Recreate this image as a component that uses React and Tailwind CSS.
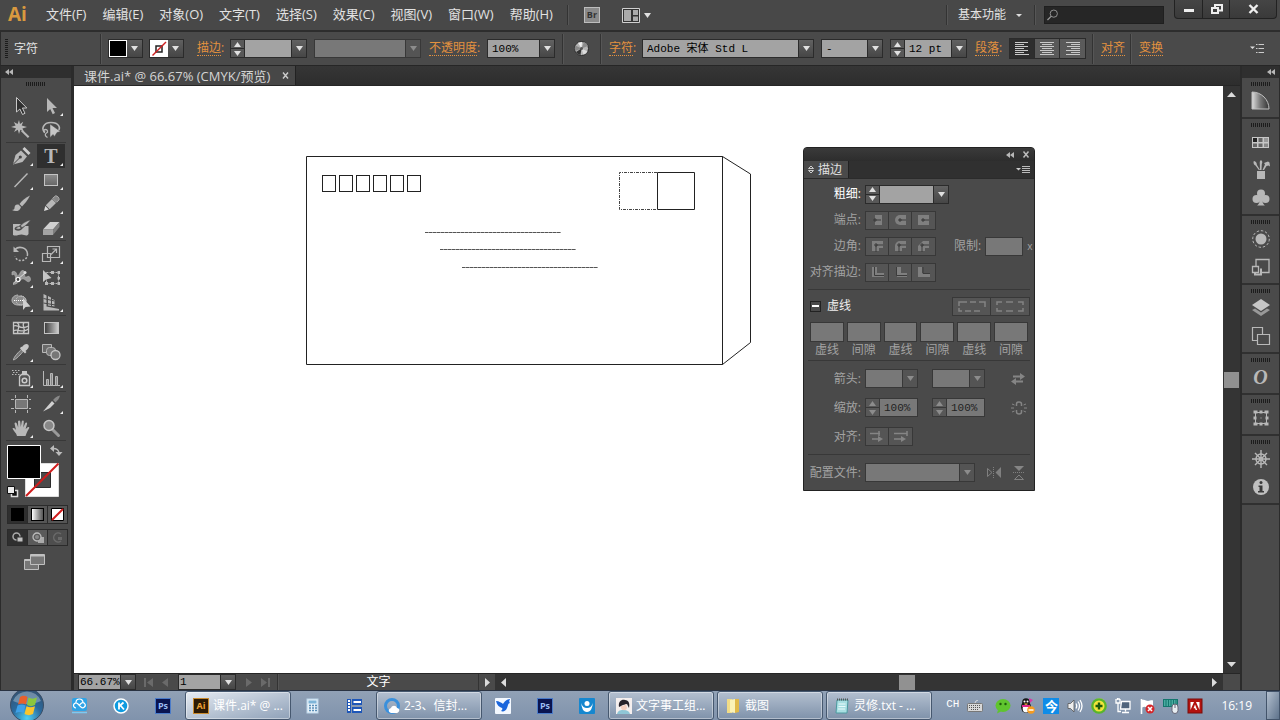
import { useState } from 'react'
import clsx from 'clsx'

const menus = ['文件(F)', '编辑(E)', '对象(O)', '文字(T)', '选择(S)', '效果(C)', '视图(V)', '窗口(W)', '帮助(H)']

/* ---------- small shared pieces ---------- */

function Caret({ up, dim }) {
  return (
    <svg width="7" height="5" viewBox="0 0 7 5" aria-hidden="true">
      <path d={up ? 'M0 5L3.5 0 7 5z' : 'M0 0h7L3.5 5z'} fill={dim ? '#8c8c8c' : '#e0e0e0'} />
    </svg>
  )
}

function DoubleArrow({ className }) {
  return (
    <svg className={className} width="8" height="6" viewBox="0 0 8 6" aria-hidden="true">
      <path d="M4 0v6L0 3zM8 0v6L4 3z" fill="#b8b8b8" />
    </svg>
  )
}

function Grip() {
  return (
    <svg width="20" height="4" viewBox="0 0 20 4" aria-hidden="true">
      <path d="M.5 0v4M2.500 0v4M4.500 0v4M6.500 0v4M8.500 0v4M10.500 0v4M12.500 0v4M14.500 0v4M16.500 0v4M18.500 0v4" stroke="#1c1c1c" />
    </svg>
  )
}

function Divider({ className }) {
  return <span className={clsx('border-l border-[#333] border-r border-r-[#565656]', className)} />
}

function Combo({ label, value = '', dim, tight, className }) {
  return (
    <span className={clsx('relative flex border', dim ? 'border-[#383838]' : 'border-[#2b2b2b]', tight ? 'h-4' : 'h-[19px]', className)}>
      <select
        aria-label={label}
        defaultValue={value}
        className={clsx(
          'h-full w-full appearance-none text-[11px] leading-[14px] text-black',
          tight ? 'pl-px' : 'pl-1',
          dim ? 'bg-[#787878]' : 'bg-[#a3a3a3]'
        )}
      >
        <option value={value}>{value}</option>
      </select>
      <span
        className={clsx(
          'pointer-events-none absolute inset-y-0 right-0 flex w-[15px] items-center justify-center border-l',
          dim ? 'border-[#383838] bg-[#545454]' : 'border-[#2b2b2b] bg-linear-to-b from-[#626262] to-[#464646]'
        )}
      >
        <Caret dim={dim} />
      </span>
    </span>
  )
}

function Stepper({ label, value = '', dim, drop, className }) {
  const line = dim ? 'border-[#383838]' : 'border-[#2b2b2b]'
  return (
    <span className={clsx('flex h-[19px] border', line, className)}>
      <span className={clsx('flex w-[14px] shrink-0 flex-col border-r bg-[#585858]', line)}>
        <button aria-label={`${label}增加`} className={clsx('flex flex-1 items-center justify-center border-b', line)}>
          <Caret up dim={dim} />
        </button>
        <button aria-label={`${label}减少`} className="flex flex-1 items-center justify-center">
          <Caret dim={dim} />
        </button>
      </span>
      <input
        aria-label={label}
        defaultValue={value}
        className={clsx('w-0 min-w-0 flex-1 pl-1 text-[11px] leading-4', dim ? 'bg-[#787878] text-[#222]' : 'bg-[#a3a3a3] text-black')}
      />
      {drop && (
        <button
          aria-label={`${label}选项`}
          className="flex w-[15px] shrink-0 items-center justify-center border-l border-[#2b2b2b] bg-linear-to-b from-[#626262] to-[#464646]"
        >
          <Caret />
        </button>
      )}
    </span>
  )
}

function OrangeLink({ children, colon, className }) {
  return (
    <span className={clsx('flex shrink-0 text-[#e3913f]', className)}>
      <a href="#" className="border-b border-dotted border-[#e3913f] leading-[14px]">
        {children}
      </a>
      {colon && <span className="leading-[14px]">:</span>}
    </span>
  )
}

/* ---------- menu bar ---------- */

function MenuBar() {
  return (
    <header className="flex h-8 shrink-0 items-start border-b-2 border-[#2d2d2d] bg-[#484848] text-[#e2e2e2]">
      <span className="ml-2 w-[38px] font-['Open_Sans',sans-serif] text-[19px] leading-7 font-bold text-[#d9993f]">Ai</span>
      <nav className="flex h-[30px] items-center gap-4 text-[13px]" aria-label="主菜单">
        {menus.map(m => (
          <button key={m} className="whitespace-nowrap">
            {m}
          </button>
        ))}
      </nav>
      <div className="flex h-[30px] items-center">
        <Divider className="ml-3.5 h-5" />
        <button
          aria-label="Bridge"
          className="ml-[15px] flex h-4 w-4 items-center justify-center border border-[#bdbdbd] bg-[#8a8a8a] text-[9px] leading-3 font-bold text-[#333]"
        >
          Br
        </button>
        <button aria-label="排列文档" className="ml-[22px] flex items-center gap-1">
          <svg width="18" height="15" viewBox="0 0 18 15">
            <path d="M.5.5h17v14H.5z" fill="#333" stroke="#d0d0d0" />
            <path d="M2 2h7v11H2zM11 2h5v5h-5zM11 8.500h5V13h-5z" fill="#aaa" />
          </svg>
          <Caret />
        </button>
      </div>
      <div className="ml-auto flex h-[30px] items-center">
        <Divider className="h-5" />
        <button className="ml-2.5 flex items-center gap-2.5 text-[12px] whitespace-nowrap">
          基本功能
          <svg width="6" height="3" viewBox="0 0 6 3">
            <path d="M0 0h6L3 3z" fill="#ddd" />
          </svg>
        </button>
        <Divider className="ml-3 h-5" />
        <label className="ml-2 flex h-[18px] w-[120px] items-center border border-[#1f1f1f] bg-[#262626] pl-0.5">
          <svg width="12" height="12" viewBox="0 0 12 12" fill="none" stroke="#9a9a9a">
            <circle cx="7.500" cy="4.500" r="4" />
            <path d="M4.500 7.500L.5 11.500" strokeWidth="1.500" />
          </svg>
          <input type="search" aria-label="搜索" className="w-full min-w-0 bg-transparent pl-1 text-[11px] outline-none" />
        </label>
      </div>
      <div className="mr-[3px] ml-2.5 flex h-[19px] divide-x divide-[#222] overflow-hidden rounded-b border border-t-0 border-[#222] bg-linear-to-b from-[#454545] to-[#3a3a3a]">
        <button aria-label="最小化" className="flex w-7 items-center justify-center">
          <svg width="12" height="12" viewBox="0 0 12 12">
            <path d="M1 6h10v3H1z" fill="#eee" />
          </svg>
        </button>
        <button aria-label="还原" className="flex w-[27px] items-center justify-center">
          <svg width="13" height="12" viewBox="0 0 13 12" fill="none" stroke="#eee" strokeWidth="2">
            <path d="M5 4V2h7v5.500H9" />
            <path d="M2 5h6v5H2z" />
          </svg>
        </button>
        <button aria-label="关闭" className="flex w-[46px] items-center justify-center">
          <svg width="11" height="10" viewBox="0 0 11 10">
            <path d="M1.500 1l8 8M9.500 1l-8 8" stroke="#eee" strokeWidth="2.400" />
          </svg>
        </button>
      </div>
    </header>
  )
}

/* ---------- control bar ---------- */

const alignIcons = [
  ['左对齐', 'M0 .5h13M0 2.500h9M0 4.500h13M0 6.500h9M0 8.500h13M0 10.500h9M0 12.500h14'],
  ['居中对齐', 'M0 .5h14M2 2.500h10M0 4.500h14M2 6.500h10M0 8.500h14M2 10.500h10M0 12.500h14'],
  ['右对齐', 'M0 .5h14M5 2.500h9M1 4.500h13M5 6.500h9M0 8.500h14M5 10.500h9M0 12.500h14'],
]

function ControlBar() {
  const [align, setAlign] = useState('左对齐')
  return (
    <div className="flex h-[34px] shrink-0 items-center border-b border-l border-b-[#262626] border-l-[#2b2b2b] bg-[#4a4a4a] text-[12px] text-[#e2e2e2]">
      <svg className="ml-1" width="3" height="20" viewBox="0 0 3 20" aria-hidden="true">
        <path d="M0 .5h3M0 2.500h3M0 4.500h3M0 6.500h3M0 8.500h3M0 10.500h3M0 12.500h3M0 14.500h3M0 16.500h3M0 18.500h3" stroke="#1c1c1c" />
      </svg>
      <span className="ml-1.5 w-[86px] shrink-0">字符</span>
      <Divider className="h-[30px]" />
      <div className="ml-[6px] flex h-[19px] border border-[#2b2b2b]">
        <button aria-label="填色" className="w-[18px] border border-white bg-black" />
        <button aria-label="填色选项" className="flex w-[15px] items-center justify-center bg-linear-to-b from-[#606060] to-[#464646]">
          <Caret />
        </button>
      </div>
      <div className="ml-[6px] flex h-[19px] border border-[#2b2b2b]">
        <button aria-label="描色" className="w-[18px] bg-white">
          <svg width="18" height="17" viewBox="0 0 18 17">
            <path d="M6 6h6v6H6z" fill="none" stroke="#222" strokeWidth="1.500" />
            <path d="M2.500 15.500L16 2" stroke="#cf2020" strokeWidth="1.500" />
          </svg>
        </button>
        <button aria-label="描色选项" className="flex w-[15px] items-center justify-center bg-linear-to-b from-[#606060] to-[#464646]">
          <Caret />
        </button>
      </div>
      <OrangeLink colon className="ml-[13px] w-[33px]">描边</OrangeLink>
      <Stepper label="描边粗细" drop className="w-[77px]" />
      <Combo label="画笔定义" dim className="ml-[7px] w-[107px]" />
      <OrangeLink colon className="ml-2 w-[58px]">不透明度</OrangeLink>
      <Combo label="不透明度" value="100%" className="w-[68px] font-['Liberation_Mono',monospace]" />
      <Divider className="ml-[7px] h-[30px]" />
      <button aria-label="重新着色图稿" className="ml-2.5">
        <svg width="15" height="15" viewBox="0 0 15 15">
          <circle cx="7.500" cy="7.500" r="7" fill="#b5b5b5" stroke="#2a2a2a" />
          <path d="M7.500 7.500L1.500 4.500A7 7 0 0 0 1 10z" fill="#8a8a8a" />
          <path d="M7.500 7.500L2 11a7 7 0 0 0 4.500 3z" fill="#333" />
          <path d="M7.500 7.500L10 1a7 7 0 0 1 4 4z" fill="#8b8b8b" />
          <path d="M7.500 7.500L13.500 10.500a7 7 0 0 1-4 3z" fill="#dcdcdc" />
          <path d="M7.500 7.500L4 1.800 8 1z" fill="#eee" />
          <circle cx="7.500" cy="7.500" r="1.500" fill="#555" />
        </svg>
      </button>
      <Divider className="ml-[11px] h-[30px]" />
      <OrangeLink colon className="ml-[7px] w-[33px]">字符</OrangeLink>
      <Combo
        label="字体"
        value="Adobe 宋体 Std L"
        className="w-[172px] font-['Liberation_Mono','Noto_Sans_CJK_SC',monospace]"
      />
      <Combo label="字体样式" value="-" className="ml-[7px] w-[62px] font-['Liberation_Mono',monospace]" />
      <Stepper label="字号" value="12 pt" drop className="ml-[7px] w-[77px] font-['Liberation_Mono',monospace]" />
      <OrangeLink colon className="ml-2 w-[34px]">段落</OrangeLink>
      <div className="flex h-[21px] divide-x divide-[#2b2b2b] border border-[#2b2b2b]">
        {alignIcons.map(([name, d]) => (
          <button
            key={name}
            aria-label={name}
            aria-pressed={align === name}
            onClick={() => setAlign(name)}
            className={clsx('flex w-[25px] items-center justify-center', align === name ? 'bg-[#2e2e2e]' : 'bg-[#5a5a5a]')}
          >
            <svg width="14" height="13" viewBox="0 0 14 13">
              <path d={d} stroke="#c9c9c9" />
            </svg>
          </button>
        ))}
      </div>
      <Divider className="ml-[6px] h-[30px]" />
      <OrangeLink className="ml-[7px]">对齐</OrangeLink>
      <Divider className="ml-[5px] h-[30px]" />
      <OrangeLink className="ml-[7px]">变换</OrangeLink>
      <button aria-label="面板菜单" className="mr-4 ml-auto">
        <svg width="14" height="9" viewBox="0 0 14 9">
          <path d="M0 2.500h5L2.500 5z" fill="#ddd" />
          <path d="M6 .5h1.500M6 4.500h1.500M6 8.500h1.500M8.500.5H14M8.500 4.500H14M8.500 8.500H14" stroke="#ccc" />
        </svg>
      </button>
    </div>
  )
}

/* ---------- tool icons, drawn on a 20x20 grid ---------- */

const G = '#b8b8b8'

const toolIcons = {
  select: <path d="M5.500 1.500v14.500l3.400-3 2.600 5.500 2.500-1.200-2.600-5.300h4.400z" fill="#303030" stroke="#c8c8c8" />,
  direct: <path d="M6 2v14l3.200-3 2.500 5.200 2.300-1.100-2.500-5.100H16z" fill={G} />,
  wand: (
    <g fill={G}>
      <path d="M8 0l1 4 3.200-2.200L10.700 5.500 16 7l-4.600 1.400 1.600 3.400-3.600-2L8 14 6.800 9.800 3 12l2-3.800L0 7l4.600-1.500L2.800 2 6.600 4z" />
      <path d="M10 11.200l1.400-1.400 7 6.800-1.500 1.500z" />
    </g>
  ),
  lasso: (
    <g>
      <path d="M4 12.500C0 9.500 2 2.500 10 2.500c8 0 10 5.500 7 8.500" fill="none" stroke={G} strokeWidth="1.600" />
      <path d="M4 12.500c-2-.5-1.500-3 .5-3s3 2.500 1 3.500-1.500 3 1 4.500" fill="none" stroke={G} strokeWidth="1.300" />
      <path d="M9 4v13.500l3-3 1.500 2 2.500-4 3.500-1z" fill="#c6c6c6" stroke="#4a4a4a" strokeWidth=".5" />
    </g>
  ),
  pen: (
    <g>
      <path d="M2 18.500L4.500 9l5.500-4.500 6 6-4.500 5.500z" fill={G} />
      <path d="M11.500 3L13.500 1l6 6-2 2z" fill="#cdcdcd" />
      <path d="M2.500 18L8.500 12" stroke="#444" />
      <circle cx="9.300" cy="11" r="1.600" fill="#444" />
    </g>
  ),
  line: <path d="M3.500 17L16.500 3.500" stroke={G} strokeWidth="1.400" />,
  rect: <rect x="3.500" y="4.500" width="13" height="11" fill="url(#toolShade)" stroke="#c4c4c4" />,
  brush: (
    <g fill={G}>
      <path d="M19 1.500C14 4 10 7.500 8.500 10l2.500 2.500C13.500 10 17 6 19 1.500z" />
      <path d="M7.500 10.500c-3-.5-4 1.500-4 3.500 0 1-1 2-2.500 2 3 2 8 1.500 9-3z" />
    </g>
  ),
  pencil: (
    <g>
      <path d="M3 17l1.300-5L7.800 15.500z" fill="#ddd" />
      <path d="M4.800 11.300L11 5l4 4-6.300 6.200z" fill={G} />
      <path d="M11.600 4.300l3-2.500c2 0 3.800 2 3.500 4l-2.500 2.500z" fill="#858585" stroke="#aaa" />
    </g>
  ),
  blob: (
    <g fill={G}>
      <path d="M2 6h8L7.500 8.500C5 8.500 4 9 3.500 11c1 2 4.500 2 6.500 1l4-4h3.500v8c-2 3-4 .5-7 .5S5 18.500 2 17z" />
      <path d="M19.500 2C15 3 11 5.500 9.500 8l1.500 1.500c3-1 6.500-4.500 8.500-7.500zM8.500 8.500c-2 0-2.500 1.500-4 2 1.500 1 5 1 5.500-.5z" stroke="#4a4a4a" strokeWidth=".5" />
    </g>
  ),
  eraser: (
    <g>
      <path d="M2 11.500l7-7.500h9.500L12 11.500z" fill="#d0d0d0" />
      <path d="M2 11.500h10V17H2z" fill="#a3a3a3" />
      <path d="M12 11.500l6.500-7.500v5L12 17z" fill="#7d7d7d" />
    </g>
  ),
  rotate: (
    <g fill="none" stroke={G} strokeWidth="1.500">
      <path d="M4 5.500C8 1.500 16 3.500 16.500 10" />
      <path d="M16.500 10c0 8-10.500 8.500-12.500 2.500" strokeDasharray="2 1.500" />
      <path d="M2.500 2.500v5.500H8z" fill={G} stroke="none" />
    </g>
  ),
  scale: (
    <g fill="none" stroke={G} strokeWidth="1.200">
      <path d="M6.500 2.500h12v11h-12z" />
      <path d="M1.500 9.500h8v8h-8z" />
      <path d="M10 10.500L15.500 5M11.500 5h4v4" />
    </g>
  ),
  width: (
    <g>
      <path d="M1 4c3-2 5 1 5 4 3 0 3-6 6-5.500s.5 6 2.500 6.500 3-2 4.500.5-.5 5-2.500 4-4-4-6.500-2-4 5-8 5c3-2 3-4 2.500-7S3 6 1 7z" fill="#999" stroke={G} strokeWidth=".6" />
      <path d="M2 15.500L14 5" stroke="#ddd" />
      <circle cx="7" cy="11.500" r="2" fill="#444" stroke="#fff" strokeWidth="1.200" />
      <circle cx="14" cy="4.500" r="1.500" fill="#ddd" />
    </g>
  ),
  free: (
    <g>
      <path d="M5.500 4.500h12v11h-12z" fill="none" stroke={G} strokeDasharray="2 1" />
      <path d="M10 3h3v3h-3zM16.500 3H19v3h-2.500zM16.500 9H19v2.500h-2.500zM16.500 14H19v3h-2.500zM10 14h3v3h-3zM4 14h3v3H4z" fill={G} />
      <path d="M2 2v12l3-2.500L10.500 10z" fill="#c6c6c6" />
    </g>
  ),
  builder: (
    <g>
      <path d="M7 3c-8 .5-8 10 0 10h4c6-1 5-9-2-9" fill="#8b8b8b" stroke={G} />
      <path d="M3 8.500h9" stroke="#fff" strokeDasharray="1 1" />
      <ellipse cx="10" cy="8.500" rx="5" ry="4.500" fill="none" stroke="#ccc" strokeDasharray="1 1" />
      <path d="M12 6v12l2.600-3 4.900-.5z" fill="#d0d0d0" />
    </g>
  ),
  perspective: (
    <g>
      <path d="M2.500 2l3 1.500v11L18 17v1.500H2.500z" fill={G} />
      <path d="M7 4l3 1.500V14L7 13.500zM11 7l2.500 1v6.500L11 14z" fill={G} />
      <path d="M2.500 6.500l11 2.500M2.500 11l12 2" stroke="#4a4a4a" fill="none" />
    </g>
  ),
  mesh: (
    <g fill="none" stroke="#c6c6c6" strokeWidth="1.300">
      <path d="M2.500 4.500h15v11h-15z" />
      <path d="M2.500 8C7 5.500 9 13 17.500 8M2.500 13c4-3 9 3 15-2M6 4.500c5 3-1 8 1 11M13 4.500c-3 3 3 8-1 11" />
    </g>
  ),
  gradient: <rect x="3.500" y="4.500" width="14" height="11" fill="url(#toolGradient)" stroke="#c4c4c4" />,
  eyedropper: (
    <g>
      <path d="M2.500 18c0-3 6-9 8-10.500l1.800 1.800C10 12 5 17.500 2.500 18z" fill="#777" stroke={G} />
      <path d="M9 6.500l5 5 1.500-1.500-1-1C17 7 18.500 5 17.500 3c-2-2-4.500-.5-6.500 2L10 4.800z" fill="#c6c6c6" />
    </g>
  ),
  blend: (
    <g>
      <path d="M1.500 2.500h9v8h-9z" fill="#6a6a6a" stroke={G} />
      <rect x="5.500" y="5.500" width="9" height="8" rx="3" fill="#777" stroke={G} />
      <circle cx="14.500" cy="13" r="4.500" fill="#777" stroke="#c6c6c6" strokeWidth="1.300" />
    </g>
  ),
  spray: (
    <g>
      <path d="M1 2.500h8M2 4.500h6M1 6.500h8" stroke={G} strokeDasharray="1.500 1.500" />
      <path d="M11 3h5v3h-5z" fill="#c6c6c6" />
      <path d="M8.500 8.500l2-2h6l2 2v9h-10z" fill="#555" stroke="#c6c6c6" strokeWidth="1.300" />
      <circle cx="13.500" cy="12.500" r="2.300" fill="none" stroke="#ccc" strokeWidth="1.500" />
    </g>
  ),
  graph: (
    <g>
      <path d="M2.500 3v14.500H19" stroke={G} fill="none" />
      <path d="M5.500 11.500h2v6h-2zM9.500 5.500h2v12h-2zM14.500 8.500h2v9h-2z" fill="#888" stroke={G} />
    </g>
  ),
  artboard: (
    <g>
      <path d="M4.500 5.500h12v9h-12z" fill="#777" stroke={G} />
      <path d="M4.500 1v3M16.500 1v3M4.500 16v3M16.500 16v3M0 5.500h3M0 14.500h3M18 5.500h2M18 14.500h2" stroke={G} fill="none" />
    </g>
  ),
  slice: (
    <g>
      <path d="M2 17.500L11 7l2.500 2.500L9 14z" fill="#d0d0d0" />
      <path d="M12 6c2-2.500 3.500-3.500 7-4.500-1 3.500-2 4.500-4.500 7z" fill="#888" />
    </g>
  ),
  hand: (
    <path d="M6 18c-.5-3-4-5.500-4.500-7.500 1-1 2.500 0 3.500 1.500L3.500 5.500C4 4 5.500 4.500 6 6l1.200 3.500L7 3.500C7.300 2 9 2 9.300 3.500L9.800 9l1-5.800c.4-1.200 2-1 2 .3L12.300 9.500l2-4.500c.6-1 2-.5 1.800.8l-1.500 5.200 2.400-2c1-.4 1.800.5 1 1.500C16.500 13 15.500 15 14.500 18z" fill={G} />
  ),
  zoom: (
    <g>
      <path d="M11 11l6.500 6.500" stroke="#999" strokeWidth="3" strokeLinecap="round" />
      <circle cx="8" cy="7.500" r="5" fill="#888" stroke="#c6c6c6" strokeWidth="1.500" />
    </g>
  ),
}

const toolGroups = [
  { pad: 'pt-0', tools: [['select', '选择工具', 0], ['direct', '直接选择工具', 1], ['wand', '魔棒工具', 0], ['lasso', '套索工具', 0]] },
  {
    pad: 'pt-px',
    tools: [
      ['pen', '钢笔工具', 1], ['type', '文字工具', 1], ['line', '直线段工具', 1], ['rect', '矩形工具', 1],
      ['brush', '画笔工具', 0], ['pencil', '铅笔工具', 1], ['blob', '斑点画笔工具', 0], ['eraser', '橡皮擦工具', 1],
    ],
  },
  {
    pad: 'py-px',
    tools: [
      ['rotate', '旋转工具', 1], ['scale', '比例缩放工具', 1], ['width', '宽度工具', 1],
      ['free', '自由变换工具', 0], ['builder', '形状生成器工具', 1], ['perspective', '透视网格工具', 1],
    ],
  },
  { pad: 'pt-0', tools: [['mesh', '网格工具', 0], ['gradient', '渐变工具', 0], ['eyedropper', '吸管工具', 1], ['blend', '混合工具', 0]] },
  { pad: 'py-px', tools: [['spray', '符号喷枪工具', 1], ['graph', '柱形图工具', 1]] },
  { pad: 'pt-0', tools: [['artboard', '画板工具', 0], ['slice', '切片工具', 1], ['hand', '抓手工具', 1], ['zoom', '缩放工具', 0]] },
]

function Toolbox() {
  const [tool, setTool] = useState('type')
  return (
    <aside className="w-[74px] shrink-0 border-r-3 border-l border-[#2b2b2b] bg-[#4a4a4a]">
      <div className="flex h-3 items-center bg-[#2f2f2f] pl-1">
        <DoubleArrow />
      </div>
      <div className="flex h-4 justify-center pt-1">
        <Grip />
      </div>
      <svg className="absolute h-0 w-0" aria-hidden="true">
        <defs>
          <linearGradient id="toolShade" x2="0" y2="1">
            <stop stopColor="#8c8c8c" />
            <stop offset="1" stopColor="#666" />
          </linearGradient>
          <linearGradient id="toolGradient">
            <stop stopColor="#3a3a3a" />
            <stop offset="1" stopColor="#d0d0d0" />
          </linearGradient>
        </defs>
      </svg>
      {toolGroups.map((group, i) => (
        <div key={i} className={clsx('mx-[5px] grid grid-cols-2 gap-x-0.5 px-px', i > 0 && 'border-t border-[#383838]', group.pad)}>
          {group.tools.map(([id, name, more]) => (
            <button
              key={id}
              aria-label={name}
              aria-pressed={tool === id}
              onClick={() => setTool(id)}
              className={clsx('relative flex h-6 items-center justify-center', tool === id && 'bg-[#2f2f2f]')}
            >
              {id === 'type' ? (
                <span className="font-['Liberation_Serif',serif] text-[20px] leading-6 font-bold text-[#b8b8b8]">T</span>
              ) : (
                <svg width="20" height="20" viewBox="0 0 20 20">{toolIcons[id]}</svg>
              )}
              {more === 1 && (
                <svg className="absolute right-0.5 bottom-0.5" width="3" height="3" viewBox="0 0 3 3">
                  <path d="M3 0v3H0z" fill="#eee" />
                </svg>
              )}
            </button>
          ))}
        </div>
      ))}
      <div className="mx-[5px] border-t border-[#383838] px-px pt-1">
        <svg width="56" height="56" viewBox="0 0 56 56" role="img" aria-label="填色和描边">
          <path d="M18.500 18.500h33v33h-33z" fill="#fff" stroke="#ddd" />
          <path d="M27.500 27.500h16v15h-16z" fill="#4a4a4a" stroke="#2b2b2b" />
          <path d="M19 51L51.500 18.500" stroke="#d01c1c" strokeWidth="2" />
          <path d="M.5.500h33v33H.5z" fill="#000" stroke="#fff" />
          <path d="M46 3.500c4.500 0 6 2 6 5" fill="none" stroke="#bbb" strokeWidth="1.300" />
          <path d="M47 0v7L43 3.500zM48.500 7h7L52 11z" fill="#bbb" />
          <path d="M4.500 45.500h6v6h-6z" fill="#111" stroke="#ddd" strokeWidth="1.500" />
          <path d="M.5 41.500h7v7h-7z" fill="#eee" stroke="#111" />
        </svg>
      </div>
      <div className="mr-[3px] ml-[6px] mt-1 flex h-[19px] divide-x divide-[#2b2b2b] border border-[#2b2b2b]">
        <button aria-label="颜色" className="flex flex-1 items-center justify-center bg-[#2f2f2f]">
          <span className="h-[13px] w-[13px] bg-black" />
        </button>
        <button aria-label="渐变" className="flex flex-1 items-center justify-center bg-[#555]">
          <span className="h-[13px] w-[13px] border border-black bg-linear-to-r from-white to-[#555]" />
        </button>
        <button aria-label="无" className="flex flex-1 items-center justify-center bg-[#555]">
          <svg width="13" height="13" viewBox="0 0 13 13">
            <path d="M.5.500h12v12H.5z" fill="#fff" stroke="#000" />
            <path d="M1 12L12 1" stroke="#d01c1c" strokeWidth="2" />
          </svg>
        </button>
      </div>
      <div className="mr-[3px] ml-[6px] mt-[5px] flex h-[17px] divide-x divide-[#2b2b2b] border border-[#2b2b2b]">
        <button aria-label="正常绘图" className="flex flex-1 items-center justify-center bg-[#2f2f2f]">
          <svg width="12" height="11" viewBox="0 0 12 11">
            <circle cx="4.500" cy="4.500" r="3.500" fill="none" stroke="#aaa" strokeWidth="1.500" />
            <path d="M5 5h6v5H5z" fill="#c0c0c0" stroke="#333" />
          </svg>
        </button>
        <button aria-label="背面绘图" className="flex flex-1 items-center justify-center bg-[#5a5a5a]">
          <svg width="12" height="11" viewBox="0 0 12 11">
            <path d="M6 5h6v6H6z" fill="#aaa" />
            <circle cx="5" cy="5" r="4" fill="#5a5a5a" stroke="#bbb" strokeWidth="1.300" />
            <circle cx="5" cy="5" r="2" fill="#888" />
          </svg>
        </button>
        <button aria-label="内部绘图" className="flex flex-1 items-center justify-center bg-[#4e4e4e]">
          <svg width="12" height="11" viewBox="0 0 12 11">
            <path d="M9 2a4.500 4.500 0 1 0 0 7" fill="none" stroke="#6a6a6a" strokeWidth="1.500" />
            <path d="M6 5h4v3H6z" fill="#6a6a6a" />
          </svg>
        </button>
      </div>
      <button aria-label="更改屏幕模式" className="mt-2 ml-[22px] block">
        <svg width="23" height="17" viewBox="0 0 23 17" stroke="#c0c0c0" fill="#777">
          <path d="M1.500 5.500h14v10h-14z" />
          <path d="M7.500.500h14v10h-14z" />
          <path d="M2 6h5M8 1.500h13" strokeWidth="2" />
        </svg>
      </button>
    </aside>
  )
}

/* ---------- right dock ---------- */

const dockGroups = [
  [['颜色', <g key="c"><path d="M1 1v17h17A17 17 0 0 0 1 1z" fill="url(#dockWedge)" stroke="#c0c0c0" /></g>]],
  [
    ['色板', <g key="s"><path d="M1 5h17v11H1z" fill="#c6c6c6" /><path d="M2 6h4v4H2z" fill="#222" /><path d="M7.500 6h4v4h-4zM2 11.500h4V15H2zM7.500 11.500h4V15h-4z" fill="#666" /><path d="M13 6h4v4h-4z" fill="#999" /><path d="M13 11.500h4V15h-4z" fill="#888" /></g>],
    ['画笔', <g key="b" fill="#b8b8b8"><path d="M6 11h8v8H6z" /><path d="M9 10L8.800 3.500C8.500 1 9.500-.5 10.500.5s1 2 .3 3.500L10.500 10zM7.800 10L4.500 5.500C2.500 4.500 2 2 3 1c2 .5 3 2 2.800 3.800L9 10zM11.500 10l2.500-5.500-1-1.500 4-1.500 1.500 1 .5 4-1.500-1-2 .500L13 10z" /></g>],
    ['符号', <g key="y" fill="#b8b8b8"><circle cx="10" cy="5.500" r="4" /><circle cx="5.500" cy="11" r="4" /><circle cx="14.500" cy="11" r="4" /><path d="M9 9h2c0 5 1 7 3 8.500H6C8 16 9 14 9 9z" /></g>],
  ],
  [
    ['外观', <g key="a"><circle cx="10" cy="10" r="5.500" fill="#b8b8b8" /><circle cx="10" cy="10" r="8.300" fill="none" stroke="#b8b8b8" strokeDasharray="2.500 1.800" /></g>],
    ['图形样式', <g key="g" fill="none" stroke="#b8b8b8" strokeWidth="1.300"><path d="M5 9V2.500h13v13H11" /><path d="M4 10.500v7h6v-6" strokeWidth="2" /><path d="M1.500 9.500h6v6h-6z" fill="#4a4a4a" /></g>],
  ],
  [
    ['图层', <g key="l"><path d="M1 12l9 6 9-6-3-1.500-6 4-6-4z" fill="#999" /><path d="M10 1l9 6-9 6-9-6z" fill="#c6c6c6" /></g>],
    ['画板', <g key="r" fill="#4a4a4a" stroke="#b8b8b8" strokeWidth="1.200"><path d="M1.500 1.500h10v13h-10z" /><path d="M6.500 8.500h12v10h-12z" /></g>],
  ],
  [['OpenType', null]],
  [['变换', <g key="t"><path d="M4.500 4.500h11v11h-11z" fill="none" stroke="#b8b8b8" /><path d="M2.500 2.500h4v3h-4zM8.500 2.500h3v3h-3zM13.500 2.500h4v3h-4zM2.500 8.500h3v3h-3zM14.500 8.500h3v3h-3zM2.500 14.500h4v3h-4zM8.500 14.500h3v3h-3zM13.500 14.500h4v3h-4z" fill="#b8b8b8" /><path d="M9.500 9.500h1v1h-1z" fill="#b8b8b8" /></g>]],
  [
    ['导航器', <g key="n" stroke="#b8b8b8" fill="none" strokeWidth="1.400"><circle cx="10" cy="10" r="5" /><path d="M10 1v18M1 10h18M4 4l12 12M16 4L4 16" /><circle cx="10" cy="10" r="1" fill="#4a4a4a" /></g>],
    ['信息', <g key="i"><circle cx="10" cy="10" r="8" fill="#c0c0c0" /><circle cx="10" cy="5.500" r="1.500" fill="#3a3a3a" /><path d="M7.500 8.500h4V14h1.500v1.500h-6V14h1.500v-4H7.500z" fill="#3a3a3a" /></g>],
  ],
]

function Dock() {
  return (
    <aside className="w-10 shrink-0 border-r border-l-2 border-[#2b2b2b] bg-[#4a4a4a]">
      <div className="flex h-3 items-center justify-end bg-[#2f2f2f] pr-1">
        <DoubleArrow />
      </div>
      {dockGroups.map((group, i) => (
        <div key={i} className="flex flex-col items-center border-b-2 border-[#303030] pb-0.5">
          <div className="flex h-[9px] items-start pt-1">
            <Grip />
          </div>
          {group.map(([name, icon]) => (
            <button key={name} aria-label={name} className="flex h-7 w-7 items-center justify-center">
              {icon ? (
                <svg width="20" height="20" viewBox="0 0 20 20">
                  <defs>
                    <linearGradient id="dockWedge">
                      <stop stopColor="#ddd" />
                      <stop offset=".5" stopColor="#777" />
                      <stop offset="1" stopColor="#333" />
                    </linearGradient>
                  </defs>
                  {icon}
                </svg>
              ) : (
                <span className="font-['Liberation_Serif',serif] text-[20px] leading-7 font-bold text-[#b8b8b8] italic">O</span>
              )}
            </button>
          ))}
        </div>
      ))}
    </aside>
  )
}

/* ---------- document ---------- */

function Envelope() {
  return (
    <svg className="absolute top-0 left-0" width="700" height="300" viewBox="74 86 700 300" fill="none" stroke="#222" role="img" aria-label="信封">
      <path d="M306.500 156.500h416v208h-416z" />
      <path d="M722.500 156.500l28 17.500v168.500l-28 22z" />
      {[0, 1, 2, 3, 4, 5].map(i => (
        <rect key={i} x={322.5 + i * 17} y="175.500" width="13" height="16" />
      ))}
      <path d="M657 172.500h-37.500v37H657" strokeDasharray="3 1 1 1" stroke="#444" />
      <path d="M657.500 172.500h37v37h-37z" />
      <path d="M425 232.500h136M440 249.500h136M462 267.500h136" stroke="#999" />
      <path d="M425 232.500h136M440 249.500h136M462 267.500h136" stroke="#555" strokeDasharray="3 1" />
    </svg>
  )
}

function Label({ children, bright }) {
  return (
    <span className={clsx('w-[55px] shrink-0 text-right whitespace-nowrap', bright ? 'text-white' : 'text-[#a2a2a2]')}>
      {children}:
    </span>
  )
}

function PanelRow({ children, className }) {
  return <div className={clsx('flex items-center gap-1 pl-0.5', className)}>{children}</div>
}

function IconButtons({ items, className }) {
  return (
    <span className="flex divide-x divide-[#383838] border border-[#383838] bg-[#555]">
      {items.map(([name, icon]) => (
        <button key={name} aria-label={name} className={clsx('flex items-center justify-center', className)}>
          {icon}
        </button>
      ))}
    </span>
  )
}

function glyph(d, dot) {
  return (
    <svg width="13" height="12" viewBox="0 0 13 12">
      <path d={d} fill="#7f7f7f" />
      <path d={dot} stroke="#3c3c3c" fill="none" />
    </svg>
  )
}

const caps = [
  ['平头端点', glyph('M4 1h7v10H4z', 'M3 6h7M3 5h2v2H3z')],
  ['圆头端点', glyph('M6 1h6v10H6A5 5 0 0 1 6 1z', 'M5 6h7M5 5h2v2H5z')],
  ['方头端点', glyph('M1 1h11v10H1z', 'M5 6h7M5 5h2v2H5z')],
]
const joins = [
  ['斜接连接', glyph('M1 1h11v7H8v3H1z', 'M5 12V5h7M4 4h2v2H4z')],
  ['圆角连接', glyph('M6 1h6v7H8v3H1V6a5 5 0 0 1 5-5z', 'M5 12V5h7M4 4h2v2H4z')],
  ['斜角连接', glyph('M6 1h6v7H8v3H1V6z', 'M5 12V5h7M4 4h2v2H4z')],
]
const strokeAligns = [
  ['使描边居中对齐', glyph('M1 1h5v6h7v4H1z', 'M3.500 1v8.500H13')],
  ['使描边内侧对齐', glyph('M3 1h4v6h6v4H3z', 'M2.500 1v8.500H13')],
  ['使描边外侧对齐', glyph('M1 1h4v6h8v4H1z', 'M6 1v6.500H13')],
]
const dashes = [
  ['保留虚线和间隙的精确长度', <svg key="a" width="28" height="11" viewBox="0 0 28 11"><path d="M1 5V1h8M12 1h6M21 1h6v5M1 7v3h3M7 10h6M16 10h6" fill="none" stroke="#838383" strokeWidth="1.500" /></svg>],
  ['使虚线与边角对齐', <svg key="b" width="28" height="11" viewBox="0 0 28 11"><path d="M1 4V1h5M10 1h7M22 1h5v3M1 7v3h5M10 10h7M22 10h5V7" fill="none" stroke="#838383" strokeWidth="1.500" /></svg>],
]
const arrowAligns = [
  ['箭头超出路径终点', <svg key="a" width="14" height="11" viewBox="0 0 14 11"><path d="M0 2.500h10M9 0v5M2 8h7" stroke="#858585" strokeWidth="1.500" /><path d="M8 5l5 3-5 3z" fill="#858585" /></svg>],
  ['箭头置于路径终点', <svg key="b" width="14" height="11" viewBox="0 0 14 11"><path d="M0 2.500h13M13 0v5M0 8h7" stroke="#858585" strokeWidth="1.500" /><path d="M7 5l5 3-5 3z" fill="#858585" /></svg>],
]

function StrokePanel() {
  const [dashed, setDashed] = useState(false)
  return (
    <section
      aria-label="描边"
      className="absolute top-[61px] left-[729px] w-[232px] overflow-hidden rounded-t border border-[#222] bg-[#4a4a4a] text-[12px] leading-4 text-[#a2a2a2]"
    >
      <div className="flex h-[13px] items-center justify-end gap-2 bg-linear-to-b from-[#3a3a3a] to-[#2d2d2d] pr-1">
        <button aria-label="折叠"><DoubleArrow /></button>
        <button aria-label="关闭面板">
          <svg width="8" height="7" viewBox="0 0 8 7">
            <path d="M1.500.500l5 6M6.500.500l-5 6" stroke="#bbb" strokeWidth="1.500" />
          </svg>
        </button>
      </div>
      <div className="flex h-[18px] justify-between border-b border-[#2b2b2b] bg-[#303030]">
        <button className="flex w-[45px] items-center gap-1 border-r border-[#222] bg-[#4a4a4a] pl-1 text-[#e0e0e0]">
          <svg width="6" height="9" viewBox="0 0 6 9" fill="none" stroke="#ccc">
            <path d="M.5 3.500L3 1l2.500 2.500zM.5 5.500L3 8l2.500-2.500z" />
          </svg>
          描边
        </button>
        <button aria-label="描边面板菜单" className="mr-1">
          <svg width="14" height="8" viewBox="0 0 14 8">
            <path d="M0 2h5L2.500 4.500z" fill="#ccc" />
            <path d="M6 .5h8M6 2.500h8M6 4.500h8M6 6.500h8" stroke="#bbb" />
          </svg>
        </button>
      </div>
      <div className="pt-0.5">
        <PanelRow className="h-[26px]">
          <Label bright>粗细</Label>
          <Stepper label="粗细" drop className="w-[84px]" />
        </PanelRow>
        <PanelRow className="h-[26px]">
          <Label>端点</Label>
          <IconButtons items={caps} className="h-[17px] w-[23px]" />
        </PanelRow>
        <PanelRow className="h-[26px]">
          <Label>边角</Label>
          <IconButtons items={joins} className="h-[17px] w-[23px]" />
          <label className="ml-3.5 flex items-center gap-1">
            <span className="whitespace-nowrap">限制:</span>
            <input className="h-[19px] w-[38px] border border-[#383838] bg-[#787878] pl-1 text-[11px]" />
            <span className="text-[10px]">x</span>
          </label>
        </PanelRow>
        <PanelRow className="h-[26px]">
          <Label>对齐描边</Label>
          <IconButtons items={strokeAligns} className="h-[17px] w-[23px]" />
        </PanelRow>
      </div>
      <div className="mx-1 mt-1 flex h-[33px] items-center border-t border-[#383838] pl-0.5">
        <label className="flex items-center gap-1.5 text-[#eee]">
          <span className="relative flex h-[11px] w-[11px] items-center justify-center border border-[#222]">
            <input
              type="checkbox"
              checked={dashed}
              onChange={e => setDashed(e.target.checked)}
              className="absolute inset-0 appearance-none"
            />
            <span className="h-0.5 w-[7px] bg-white" />
          </span>
          虚线
        </label>
        <span className="ml-auto">
          <IconButtons items={dashes} className="h-[17px] w-[38px]" />
        </span>
      </div>
      <div className="flex gap-[3px] px-1.5">
        {['虚线', '间隙', '虚线', '间隙', '虚线', '间隙'].map((name, i) => (
          <label key={i} className="flex w-[34px] flex-col items-center">
            <input className="h-5 w-full border border-[#383838] bg-[#787878] text-center text-[11px]" />
            {name}
          </label>
        ))}
      </div>
      <div className="mx-1 mt-0.5 border-t border-[#383838]" />
      <div className="py-[3px]">
        <PanelRow className="h-[29px]">
          <Label>箭头</Label>
          <Combo label="起点箭头" dim className="w-[53px]" />
          <Combo label="终点箭头" dim className="ml-2.5 w-[53px]" />
          <button aria-label="互换箭头" className="ml-[22px]">
            <svg width="14" height="12" viewBox="0 0 14 12" fill="#858585">
              <path d="M2 2.500h7V0l5 3.500L9 7V4.500H2zM12 7.500H5V5L0 8.500 5 12V9.500h7z" />
            </svg>
          </button>
        </PanelRow>
        <PanelRow className="h-[29px]">
          <Label>缩放</Label>
          <Stepper label="起点缩放" value="100%" dim className="w-[53px] font-['Liberation_Mono',monospace]" />
          <Stepper label="终点缩放" value="100%" dim className="ml-2.5 w-[53px] font-['Liberation_Mono',monospace]" />
          <button aria-label="链接缩放" className="ml-[22px]">
            <svg width="16" height="14" viewBox="0 0 16 14" fill="none" stroke="#858585" strokeWidth="1.500">
              <path d="M5.500 5V3q0-2 2.500-2t2.500 2v2M5.500 9v2q0 2 2.500 2t2.500-2V9" />
              <path d="M0 7h3M13 7h3M1 3l2.500 1M15 3l-2.500 1M1 11l2.500-1M15 11l-2.500-1" strokeWidth="1" />
            </svg>
          </button>
        </PanelRow>
        <PanelRow className="h-[29px]">
          <Label>对齐</Label>
          <IconButtons items={arrowAligns} className="h-[17px] w-[23px]" />
        </PanelRow>
      </div>
      <div className="mx-1 border-t border-[#383838]" />
      <PanelRow className="h-[35px]">
        <Label>配置文件</Label>
        <Combo label="配置文件" dim className="w-[110px]" />
        <button aria-label="纵向翻转" className="ml-2">
          <svg width="14" height="11" viewBox="0 0 14 11">
            <path d="M.5 1.500v8l4.500-4z" fill="none" stroke="#808080" />
            <path d="M14 0v11L8.500 5.500z" fill="#808080" />
            <path d="M6.500 0v11" stroke="#808080" strokeDasharray="1 1" />
          </svg>
        </button>
        <button aria-label="横向翻转" className="ml-2">
          <svg width="12" height="14" viewBox="0 0 12 14">
            <path d="M1 0h10L6 5z" fill="#858585" />
            <path d="M1.500 13.500h9L6 9z" fill="none" stroke="#808080" />
            <path d="M0 6.500h12" stroke="#808080" strokeDasharray="1 1" />
          </svg>
        </button>
      </PanelRow>
    </section>
  )
}

function PageNav({ d, label }) {
  return (
    <button aria-label={label} className="ml-2">
      <svg width="9" height="9" viewBox="0 0 9 9">
        <path d={d} fill="#6a6a6a" />
      </svg>
    </button>
  )
}

function ScrollArrow({ d, label, className }) {
  return (
    <button aria-label={label} className={clsx('flex h-[17px] w-[17px] shrink-0 items-center justify-center', className)}>
      <svg width="9" height="9" viewBox="0 0 9 9">
        <path d={d} fill="#dcdcdc" />
      </svg>
    </button>
  )
}

function Document() {
  return (
    <main className="flex min-w-0 flex-1 flex-col">
      <div className="flex h-5 shrink-0 border-b border-[#262626] bg-linear-to-b from-[#363636] to-[#2d2d2d]">
        <div className="flex items-center gap-3 border-r border-[#222] bg-[#474747] pr-1.5 pl-2.5 text-[13px] leading-4 text-[#d4d4d4]">
          <span className="whitespace-nowrap">课件.ai* @ 66.67% (CMYK/预览)</span>
          <button aria-label="关闭文档">
            <svg width="7" height="7" viewBox="0 0 7 7">
              <path d="M1 .5l5 6M6 .5l-5 6" stroke="#ccc" strokeWidth="1.400" />
            </svg>
          </button>
        </div>
      </div>
      <div className="flex min-h-0 flex-1">
        <div className="relative min-w-0 flex-1 bg-white">
          <Envelope />
          <StrokePanel />
        </div>
        <div className="flex w-[17px] shrink-0 flex-col items-center justify-between bg-[#343434]">
          <ScrollArrow label="向上滚动" d="M0 7h9L4.500 2z" />
          <span className="h-4 w-[15px] bg-[#919191]" />
          <ScrollArrow label="向下滚动" d="M0 2h9L4.500 7z" />
        </div>
      </div>
      <footer className="flex h-[17px] shrink-0 items-center border-t border-[#262626] bg-[#4a4a4a] text-[12px]">
        <Combo tight label="缩放级别" value="66.67%" className="ml-1 w-[58px] font-['Liberation_Mono',monospace]" />
        <PageNav label="首页" d="M0 0h2v9H0zM9 0v9L3 4.500z" />
        <PageNav label="上一页" d="M7 0v9L1 4.500z" />
        <Combo tight label="画板导航" value="1" className="ml-2 w-[58px] font-['Liberation_Mono',monospace]" />
        <PageNav label="下一页" d="M2 0v9l6-4.500z" />
        <PageNav label="末页" d="M7 0h2v9H7zM0 0v9l6-4.500z" />
        <Divider className="ml-[7px] h-4" />
        <span className="w-[199px] text-center leading-4 text-white">文字</span>
        <ScrollArrow label="状态栏菜单" className="border-l border-[#333]" d="M2 0v9l5-4.500z" />
        <div className="flex h-full flex-1 items-center bg-[#343434]">
          <ScrollArrow label="向左滚动" d="M7 0v9L2 4.500z" />
          <span className="grow-4" />
          <span className="h-[15px] w-4 bg-[#919191]" />
          <span className="grow-3" />
          <ScrollArrow label="向右滚动" d="M2 0v9l5-4.500z" />
        </div>
        <span className="w-[17px]" />
      </footer>
    </main>
  )
}

/* ---------- windows taskbar ---------- */

const appIcons = {
  cloud: <g><rect x="1" y="0" width="15" height="13" rx="2" fill="#2ea3e6" /><path d="M5 4.500A3.500 3.500 0 0 1 12 4.500M5 10a2.500 2.500 0 1 1 1.500-4.500L10 9a2.500 2.500 0 1 0 .5-4L8 7.500" fill="none" stroke="#fff" strokeWidth="1.200" /><path d="M1 14.500h15" stroke="#7cc9f2" strokeWidth="1.500" /></g>,
  kugou: <g><circle cx="8" cy="8" r="7" fill="#0f9be0" stroke="#fff" strokeWidth="1.500" /><path d="M6 4.500v7M6.500 8l4-3.500M7.500 7.500l3.500 4" stroke="#fff" strokeWidth="1.800" /></g>,
  calc: <g><rect x="3" y="1" width="11" height="14" fill="#e8f2fa" stroke="#bcd6ea" /><path d="M4.500 2.500h8v3h-8z" fill="#7fb5d8" /><path d="M5 7.500h8M5 10h8M5 12.500h8" stroke="#5a8fb8" strokeWidth="1.500" strokeDasharray="2 1" /></g>,
  film: <g><path d="M1 1h4v14H1zM6 1h10v6H6zM6 9h10v6H6z" fill="#1d56b8" /><path d="M2 3h2M2 6h2M2 9h2M2 12h2M7.500 4H15M7.500 12H15" stroke="#fff" strokeWidth="1.800" /></g>,
  browser: <g><circle cx="8" cy="8" r="6.500" fill="none" stroke="#3a90dc" strokeWidth="3" /><path d="M7 15c-3-1-3-4 0-5 1-3 5-3 6 0 3 0 3 4 0 5z" fill="#fff" /></g>,
  bird: <g><rect x="0" y="0" width="16" height="16" rx="1" fill="#f3f8ff" /><path d="M1 3c3 0 6 2 7 3 1-2 4-5 7-5-1 2-1 3 0 4-2 0-2 3-3 5-1 3-4 4-6 3 1-1 2-2 1-3-3-1-5-3-6-7z" fill="#1b66dc" /></g>,
  shield: <g><rect x="0" y="0" width="16" height="16" rx="1" fill="#1687cf" /><path d="M2 5c1 5 2 9 6 9s5-4 6-9c-1 3-3 5-6 5S3 8 2 5z" fill="#fff" /><circle cx="8" cy="5.500" r="2.500" fill="#fff" /></g>,
  avatar: <g><rect width="16" height="16" fill="#f5efee" /><path d="M3 9c-1-6 3-8 6-7 4 0 5 4 4 8l-2-4-4 1z" fill="#26222a" /><path d="M1 16c1-4 4-4 7-4s5 1 6 4z" fill="#8fc6d6" /><path d="M5 8c2 0 4-1 5-2l1 4c-1 3-5 3-6 0z" fill="#f5cfc0" /></g>,
  folder: <g><path d="M2 1h5v14H2z" fill="#f1dc86" /><path d="M5 2l5-1v14l-5-1z" fill="#fbf2b6" /><path d="M10 1h4v13l-4 1z" fill="#e0b94a" /></g>,
  note: <g><path d="M3 2h11l-1 13H2z" fill="#a9dfe2" stroke="#4c9aa0" /><path d="M4.500 6h7M4.500 8.500h7M4 11h7" stroke="#e9fbfb" /><path d="M3 1.500h11" stroke="#555" strokeDasharray="1 1" strokeWidth="2" /></g>,
}

function AppIcon({ id }) {
  if (id === 'ps' || id === 'ai') {
    return (
      <span
        className={clsx(
          "flex h-4 w-4 shrink-0 items-center justify-center border font-['Open_Sans',sans-serif] text-[9px] leading-3 font-bold",
          id === 'ps' ? 'border-[#4a7bc9] bg-[#0a1450] text-[#9bbcf2]' : 'border-[#c98a2d] bg-[#2c1a05] text-[#f0a334]'
        )}
      >
        {id === 'ps' ? 'Ps' : 'Ai'}
      </span>
    )
  }
  return <svg className="shrink-0" width="16" height="16" viewBox="0 0 16 16">{appIcons[id]}</svg>
}

function Pinned({ id, label }) {
  return (
    <button aria-label={label} className="flex h-full w-[42px] shrink-0 items-center justify-center">
      <AppIcon id={id} />
    </button>
  )
}

function Task({ id, active, children }) {
  return (
    <button
      className={clsx(
        'flex h-[29px] w-[106px] shrink-0 items-center gap-1 rounded-[3px] border border-[#46586f] pl-[7px] text-[12px] leading-4 whitespace-nowrap text-white inset-ring inset-ring-white/40',
        active ? 'bg-linear-to-br from-[#e6ebf2] to-[#8fa1b8]' : 'bg-linear-to-b from-[#b4c0d0] to-[#7f92aa]'
      )}
    >
      <AppIcon id={id} />
      {children}
    </button>
  )
}

const trayIcons = [
  ['微信', <g key="w"><ellipse cx="8" cy="7.500" rx="7.500" ry="6.500" fill="#5fc52e" /><path d="M3 12l-1 3.500 4-2z" fill="#5fc52e" /><circle cx="5.500" cy="6" r="1.200" fill="#1d5a0c" /><circle cx="10.500" cy="6" r="1.200" fill="#1d5a0c" /></g>],
  ['QQ', <g key="q"><ellipse cx="7" cy="9" rx="5" ry="6" fill="#1a1a1a" /><circle cx="7" cy="4" r="3.800" fill="#1a1a1a" /><ellipse cx="7" cy="10.500" rx="3.300" ry="4" fill="#fff" /><path d="M3 7h8v2H3z" fill="#e0248a" /><path d="M5 5.500h4L7 7z" fill="#f5a623" /><path d="M10 0l4 2-3 3z" fill="#d83aa5" /><circle cx="5.500" cy="3.500" r="1" fill="#fff" /><circle cx="8.500" cy="3.500" r="1" fill="#fff" /><circle cx="12" cy="12" r="3.800" fill="#f59b1f" /><path d="M9.500 12h5" stroke="#fff" strokeWidth="1.500" /></g>],
  ['日历', null],
  ['音量', <g key="v" fill="none" stroke="#fff" strokeWidth="1.300"><path d="M1 5.500h2.500L7 2v12l-3.500-3.500H1z" fill="#eee" stroke="#555" strokeWidth=".8" /><path d="M9 5.500q1.500 2.500 0 5M11 3.500q3 4.500 0 9M13 2q4 6 0 12" /></g>],
  ['安全卫士', <g key="s"><circle cx="8" cy="8" r="7.800" fill="#58b52c" /><path d="M8 .2a7.800 7.800 0 0 1 6 12.800A6 6 0 0 0 3 3 8 8 0 0 1 8 .2z" fill="#b8dc3c" /><circle cx="8" cy="8" r="5.500" fill="#f4e53a" /><path d="M8 4.500v7M4.500 8h7" stroke="#1d5a0c" strokeWidth="2.400" /></g>],
  ['网络', <g key="n" fill="none" stroke="#fff" strokeWidth="1.300"><path d="M6.500 3.500h8.500v7.500H5.500z" fill="#51657d" /><path d="M10.500 11v2.500M7 14.500h7M1 1v4h4V1M2.500 0v2M4 0v2M3 5v8.500h3" /></g>],
  ['操作中心', <g key="f"><path d="M2.500 1v15" stroke="#fff" strokeWidth="1.600" /><path d="M3 2c3-1 4 1 6 1s3-1 5-.5v7c-3-1-4 1-6 0s-3-1-5 0z" fill="#fff" /><circle cx="11" cy="11" r="4.500" fill="#d4272b" /><path d="M9 9l4 4M13 9l-4 4" stroke="#fff" strokeWidth="1.600" /></g>],
  ['输入设备', <g key="k"><path d="M0 1h15v8H0z" fill="#14766d" /><path d="M1 3h13M1 5h13M1 7h9" stroke="#7fe0d4" strokeDasharray="1.500 1" /><rect x="9" y="6" width="6" height="9.500" rx="3" fill="#e8eef2" stroke="#667" /><path d="M12 6v4" stroke="#667" /></g>],
  ['Adobe', <g key="a"><rect x="1" y="1" width="14" height="14" fill="#b3120f" stroke="#7a0c0a" /><path d="M3.500 4h3.500L3.500 12zM12.500 4H9l3.500 8zM8 6.500l2.200 5.500H8.700L8 10.200H6.500z" fill="#fff" /></g>],
]

function Taskbar() {
  return (
    <footer className="flex h-[30px] shrink-0 items-center border-t border-[#2a3342] bg-linear-to-b from-[#91a1b6] to-[#8093ac] text-white">
      <button aria-label="开始" className="flex w-[58px] shrink-0 items-center justify-center pr-1">
        <svg width="36" height="29" viewBox="0 0 36 29">
          <defs>
            <radialGradient id="orb" cx=".5" cy=".9" r=".9">
              <stop stopColor="#4fd0f5" />
              <stop offset=".5" stopColor="#2a6a9e" />
              <stop offset="1" stopColor="#35506e" />
            </radialGradient>
          </defs>
          <circle cx="18" cy="14" r="16.500" fill="url(#orb)" stroke="#3b4e66" />
          <path d="M4 10a15 15 0 0 1 28 0c-8 4-20 4-28 0z" fill="#fff" opacity=".3" />
          <path d="M11 6c3-2 5-1.500 7.500 0L17 13.500c-2.500-1.500-5-1.500-8 0z" fill="#e8602c" />
          <path d="M19.500 6.500c3 1.500 5 1.500 8.500 0L26 14c-3 1.500-5 1.500-8 0z" fill="#8cc63e" />
          <path d="M8.500 14.500c3-1.500 5-1.500 8 0L14.500 22c-2.500-1.500-5-1.500-8 0z" fill="#3fa0e8" />
          <path d="M17.500 15.200c3 1.500 5 1.500 8.500 0L24 23c-3 1.500-5 1.500-8.500 0z" fill="#fbc52d" />
        </svg>
      </button>
      <Pinned id="cloud" label="网盘" />
      <Pinned id="kugou" label="音乐" />
      <Pinned id="ps" label="Photoshop" />
      <div className="ml-px flex">
        <Task id="ai" active>课件.ai* @ ...</Task>
      </div>
      <Pinned id="calc" label="计算器" />
      <Pinned id="film" label="播放器" />
      <div className="ml-px flex">
        <Task id="browser">2-3、信封...</Task>
      </div>
      <Pinned id="bird" label="迅雷" />
      <Pinned id="ps" label="Photoshop" />
      <Pinned id="shield" label="助手" />
      <div className="flex gap-[3px]">
        <Task id="avatar">文字事工组...</Task>
        <Task id="folder">截图</Task>
        <Task id="note">灵修.txt - ...</Task>
      </div>
      <div className="ml-auto flex h-full items-center">
        <span className="pb-1 font-['Liberation_Mono',monospace] text-[11px] leading-4">CH</span>
        <button aria-label="键盘" className="mx-1.5 flex w-5 justify-center">
          <svg width="16" height="12" viewBox="0 0 16 12">
            <path d="M8 3q0-2 3-3" stroke="#ddd" fill="none" />
            <rect x=".5" y="3.500" width="15" height="8" rx="1" fill="#d8d8d8" stroke="#777" />
            <path d="M2 5.500h12M2 7.500h12M4 9.500h8" stroke="#555" strokeDasharray="1 1" />
          </svg>
        </button>
        {trayIcons.map(([name, icon]) => (
          <button key={name} aria-label={name} className="flex w-6 items-center justify-center">
            {icon ? (
              <svg width="16" height="16" viewBox="0 0 16 16">{icon}</svg>
            ) : (
              <span className="flex h-4 w-4 items-center justify-center bg-[#0f8ce8] text-[13px] leading-4 font-bold">今</span>
            )}
          </button>
        ))}
        <time className="mx-3.5 text-[12px] leading-4">16:19</time>
        <button aria-label="显示桌面" className="h-full w-[14px] border border-[#43546b] bg-linear-to-br from-[#b3bfce] to-[#5f738c]" />
      </div>
    </footer>
  )
}

export default function App() {
  return (
    <div className="flex h-screen min-h-[640px] flex-col overflow-hidden bg-[#4a4a4a] font-['Open_Sans','Noto_Sans_CJK_SC',sans-serif]">
      <MenuBar />
      <ControlBar />
      <div className="flex min-h-0 flex-1">
        <Toolbox />
        <Document />
        <Dock />
      </div>
      <Taskbar />
    </div>
  )
}
